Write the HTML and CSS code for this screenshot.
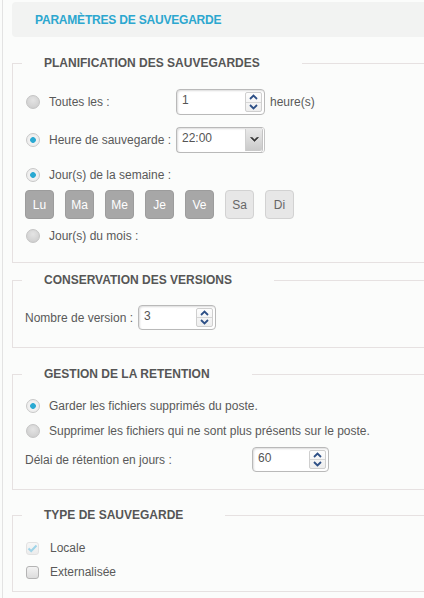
FILE: index.html
```html
<!DOCTYPE html>
<html lang="fr">
<head>
<meta charset="utf-8">
<title>Paramètres de sauvegarde</title>
<link rel="stylesheet" href="styles.css">
</head>
<body>
<div class="page">
  <div class="header">PARAMÈTRES DE SAUVEGARDE</div>

  <fieldset class="group g1">
    <legend>PLANIFICATION DES SAUVEGARDES</legend>
    <div class="row r1">
      <span class="radio"></span>
      <span class="lbl w-plan">Toutes les :</span>
      <div class="spin w89">
        <span class="val">1</span>
        <span class="arrows">
          <span class="arr"><svg width="9" height="6" viewBox="0 0 9 6"><path d="M1 5 L4.5 1.5 L8 5" fill="none" stroke="#2d4f86" stroke-width="1.8"/></svg></span>
          <span class="arr"><svg width="9" height="6" viewBox="0 0 9 6"><path d="M1 1 L4.5 4.5 L8 1" fill="none" stroke="#2d4f86" stroke-width="1.8"/></svg></span>
        </span>
      </div>
      <span class="unit">heure(s)</span>
    </div>
    <div class="row r2">
      <span class="radio on"></span>
      <span class="lbl w-plan">Heure de sauvegarde :</span>
      <div class="select w89">
        <span class="val">22:00</span>
        <span class="drop"><svg width="9" height="6" viewBox="0 0 9 6"><path d="M0.5 0.5 L4.5 4.5 L8.5 0.5 L6.8 0.5 L4.5 2.8 L2.2 0.5 Z" fill="#333" stroke="#333" stroke-width="0.6"/></svg></span>
      </div>
    </div>
    <div class="row r3">
      <span class="radio on"></span>
      <span class="lbl">Jour(s) de la semaine :</span>
    </div>
    <div class="days">
      <span class="day sel">Lu</span>
      <span class="day sel">Ma</span>
      <span class="day sel">Me</span>
      <span class="day sel">Je</span>
      <span class="day sel">Ve</span>
      <span class="day">Sa</span>
      <span class="day">Di</span>
    </div>
    <div class="row r4">
      <span class="radio"></span>
      <span class="lbl">Jour(s) du mois :</span>
    </div>
  </fieldset>

  <fieldset class="group g2">
    <legend>CONSERVATION DES VERSIONS</legend>
    <div class="row r-ver">
      <span class="lbl w-ver">Nombre de version :</span>
      <div class="spin w78">
        <span class="val">3</span>
        <span class="arrows">
          <span class="arr"><svg width="9" height="6" viewBox="0 0 9 6"><path d="M1 5 L4.5 1.5 L8 5" fill="none" stroke="#2d4f86" stroke-width="1.8"/></svg></span>
          <span class="arr"><svg width="9" height="6" viewBox="0 0 9 6"><path d="M1 1 L4.5 4.5 L8 1" fill="none" stroke="#2d4f86" stroke-width="1.8"/></svg></span>
        </span>
      </div>
    </div>
  </fieldset>

  <fieldset class="group g3">
    <legend>GESTION DE LA RETENTION</legend>
    <div class="row r-keep">
      <span class="radio on"></span>
      <span class="lbl">Garder les fichiers supprimés du poste.</span>
    </div>
    <div class="row r-del">
      <span class="radio"></span>
      <span class="lbl">Supprimer les fichiers qui ne sont plus présents sur le poste.</span>
    </div>
    <div class="row r-delay">
      <span class="lbl w-delay">Délai de rétention en jours :</span>
      <div class="spin w77">
        <span class="val">60</span>
        <span class="arrows">
          <span class="arr"><svg width="9" height="6" viewBox="0 0 9 6"><path d="M1 5 L4.5 1.5 L8 5" fill="none" stroke="#2d4f86" stroke-width="1.8"/></svg></span>
          <span class="arr"><svg width="9" height="6" viewBox="0 0 9 6"><path d="M1 1 L4.5 4.5 L8 1" fill="none" stroke="#2d4f86" stroke-width="1.8"/></svg></span>
        </span>
      </div>
    </div>
  </fieldset>

  <fieldset class="group g4">
    <legend>TYPE DE SAUVEGARDE</legend>
    <div class="row r-loc">
      <span class="check on disabled"><svg width="11" height="9" viewBox="0 0 11 9"><path d="M1.5 4.5 L4.2 7 L9.5 1.5" fill="none" stroke="#9fd4e8" stroke-width="2"/></svg></span>
      <span class="lbl">Locale</span>
    </div>
    <div class="row r-ext">
      <span class="check"></span>
      <span class="lbl">Externalisée</span>
    </div>
  </fieldset>
</div>
</body>
</html>
```

FILE: styles.css
```css
html, body {
  margin: 0;
  padding: 0;
}
body {
  background: #fbfcfb;
  font-family: "Liberation Sans", Arial, sans-serif;
  font-size: 12px;
  color: #595959;
  overflow: hidden;
}
.page {
  margin-left: 2px;
  border-left: 1px solid #e3e3e3;
  padding: 1px 0 0 9px;
  min-height: 597px;
}
.header {
  margin-top: 1px;
  height: 35px;
  line-height: 36px;
  padding-left: 23px;
  background: #f2f3f2;
  border-radius: 4px 0 0 4px;
  color: #2ca7cf;
  font-weight: bold;
  font-size: 12px;
  letter-spacing: -0.2px;
}
.group {
  margin: 19px 0 0 0;
  padding: 0 12px;
  border: 1px solid #e6e1e1;
  border-right: 0;
  min-inline-size: 0;
}
.group legend {
  margin-left: -3px;
  padding: 0 42px 0 22px;
  font-weight: bold;
  font-size: 12px;
  line-height: 14px;
  color: #565656;
}
.g1 { padding-bottom: 18px; }
.g2 { margin-top: 10px; padding-bottom: 17px; }
.g3 { margin-top: 19px; padding-bottom: 17px; }
.g4 { margin-top: 18px; padding-bottom: 11px; }

.row {
  display: flex;
  align-items: center;
  line-height: 16px;
  min-height: 16px;
}
.r1 { margin-top: 19px; height: 26px; }
.r2 { margin-top: 12px; height: 26px; }
.r3 { margin-top: 14px; }
.r4 { margin-top: 9px; }
.r-ver { margin-top: 18px; height: 25px; }
.r-keep { margin-top: 17px; }
.r-del { margin-top: 9px; }
.r-delay { margin-top: 8px; height: 25px; }
.r-loc { margin-top: 18px; }
.r-ext { margin-top: 8px; }

.lbl { white-space: nowrap; }
.w-plan { width: 127px; }
.w-ver { width: 113px; }
.w-delay { width: 227px; }
.unit { margin-left: 5px; }

.radio {
  width: 14px;
  height: 14px;
  box-sizing: border-box;
  border-radius: 50%;
  border: 1px solid #c4c4c4;
  background: radial-gradient(circle at 50% 35%, #e4e4e4 0%, #d2d2d2 70%, #c9c9c9 100%);
  margin: 0 9px 0 1px;
  flex: none;
}
.radio.on {
  background: radial-gradient(circle at 50% 50%, #2aa9d2 0, #2aa9d2 2.5px, #f2f2f2 3.2px, #e9e9e9 100%);
  border-color: #c8c8c8;
}

.check {
  width: 13px;
  height: 13px;
  box-sizing: border-box;
  border: 1px solid #b4b4b4;
  border-radius: 3px;
  background: linear-gradient(#f3f3f3, #dcdcdc);
  margin: 0 11px 0 1px;
  flex: none;
  display: flex;
  align-items: center;
  justify-content: center;
}
.check.on.disabled {
  border-color: #e2e2e2;
  background: linear-gradient(#f7f7f7, #ececec);
}

.spin, .select {
  display: flex;
  box-sizing: border-box;
  height: 26px;
  border: 1px solid #b9b9b9;
  border-radius: 4px;
  background: #fff;
  box-shadow: inset 1px 1px 2px rgba(0, 0, 0, 0.14);
  flex: none;
}
.w89 { width: 89px; }
.w78 { width: 78px; height: 25px; }
.w77 { width: 77px; height: 25px; }
.val {
  flex: 1;
  padding: 3px 0 0 5px;
  line-height: 14px;
  color: #555;
}
.arrows {
  width: 15px;
  display: flex;
  flex-direction: column;
  margin: 2px 2px 2px 0;
  border: 1px solid #cfcfcf;
  border-radius: 2px;
  background: linear-gradient(#fdfdfd, #eeeeee);
}
.arr {
  flex: 1;
  display: flex;
  align-items: center;
  justify-content: center;
}
.arr + .arr { border-top: 1px solid #d6d6d6; }

.select {
  border-right: 3px double #c4c4c4;
}
.drop {
  width: 16px;
  display: flex;
  align-items: center;
  justify-content: center;
  background: linear-gradient(#e9e9e9, #c9c9c9);
  border-left: 1px solid #cfcfcf;
  border-radius: 0 2px 2px 0;
  margin: 1px 0;
}

.days {
  display: flex;
  gap: 11px;
  margin-top: 7px;
}
.day {
  width: 29px;
  height: 29px;
  box-sizing: border-box;
  border-radius: 4px;
  border: 1px solid #d2d2d2;
  background: #e7e7e7;
  color: #666;
  display: flex;
  align-items: center;
  justify-content: center;
}
.day.sel {
  background: #a7a7a7;
  border-color: #9c9c9c;
  color: #fff;
}
```
